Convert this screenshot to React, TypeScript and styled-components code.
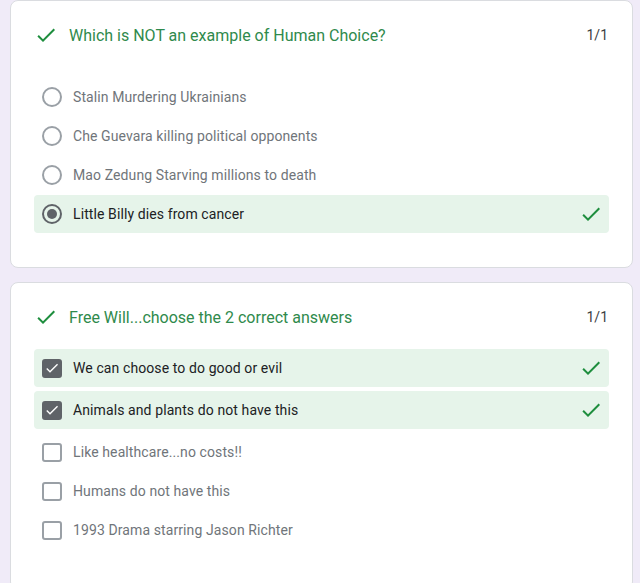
import React from "react";
import styled, { createGlobalStyle } from "styled-components";

const Global = createGlobalStyle`
  html, body { margin: 0; padding: 0; background: #f0ebf8; }
  body { font-family: Roboto, "Liberation Sans", Arial, sans-serif; }
`;

const Page = styled.div`
  display: flex;
  flex-direction: column;
  gap: 14px;
  padding: 0 7px 0 10px;
  width: 640px;
  box-sizing: border-box;
`;

const Card = styled.section<{ $pb: number }>`
  background: #fff;
  border: 1px solid #dadce0;
  border-radius: 8px;
  padding: 23px 0 ${(p) => p.$pb}px 0;
  box-sizing: border-box;
`;

const Header = styled.div<{ $mb: number }>`
  display: flex;
  align-items: center;
  height: 22px;
  padding: 0 24px 0 23px;
  margin-bottom: ${(p) => p.$mb}px;
`;

const Title = styled.div`
  flex: 1;
  margin-left: 11px;
  font-size: 16px;
  color: #2f8a4c;
`;

const Score = styled.div`
  font-size: 14px;
  color: #3c4043;
`;

const List = styled.div`
  display: flex;
  flex-direction: column;
  gap: 1px;
  padding: 0 23px;
`;

const Row = styled.div<{ $correct?: boolean; $spaced?: boolean }>`
  display: flex;
  align-items: center;
  height: 38px;
  padding: 0 6px 0 8px;
  border-radius: 4px;
  margin-bottom: ${(p) => (p.$spaced ? 3 : 0)}px;
  background: ${(p) => (p.$correct ? "#e6f4ea" : "transparent")};
`;

const Label = styled.span<{ $dark?: boolean }>`
  flex: 1;
  margin-left: 11px;
  font-size: 14px;
  color: ${(p) => (p.$dark ? "#202124" : "#70757a")};
  letter-spacing: 0.1px;
`;

const Radio = styled.span<{ $on?: boolean }>`
  width: 20px;
  height: 20px;
  box-sizing: border-box;
  border-radius: 50%;
  border: 2px solid ${(p) => (p.$on ? "#5f6368" : "#9aa0a6")};
  display: flex;
  align-items: center;
  justify-content: center;
  &::after {
    content: "";
    width: 10px;
    height: 10px;
    border-radius: 50%;
    background: ${(p) => (p.$on ? "#5f6368" : "transparent")};
  }
`;

const Box = styled.span<{ $on?: boolean }>`
  width: 20px;
  height: 19px;
  box-sizing: border-box;
  border-radius: 3px;
  border: 2px solid ${(p) => (p.$on ? "#5f6368" : "#9aa0a6")};
  background: ${(p) => (p.$on ? "#5f6368" : "transparent")};
  display: flex;
  align-items: center;
  justify-content: center;
`;

const Check = ({ size = 24, color = "#1e8e3e" }: { size?: number; color?: string }) => (
  <svg width={size} height={size} viewBox="0 0 24 24" fill={color}>
    <path d="M9 16.17L4.83 12l-1.42 1.41L9 19 21 7l-1.41-1.41z" />
  </svg>
);

type Opt = { text: string; correct?: boolean };

const q1: Opt[] = [
  { text: "Stalin Murdering Ukrainians" },
  { text: "Che Guevara killing political opponents" },
  { text: "Mao Zedung Starving millions to death" },
  { text: "Little Billy dies from cancer", correct: true },
];

const q2: Opt[] = [
  { text: "We can choose to do good or evil", correct: true },
  { text: "Animals and plants do not have this", correct: true },
  { text: "Like healthcare...no costs!!" },
  { text: "Humans do not have this" },
  { text: "1993 Drama starring Jason Richter" },
];

export default function App() {
  return (
    <>
      <Global />
      <Page>
        <Card $pb={34}>
          <Header $mb={32}>
            <Check />
            <Title>Which is NOT an example of Human Choice?</Title>
            <Score>1/1</Score>
          </Header>
          <List>
            {q1.map((o) => (
              <Row key={o.text} $correct={o.correct}>
                <Radio $on={o.correct} />
                <Label $dark={o.correct}>{o.text}</Label>
                {o.correct && <Check />}
              </Row>
            ))}
          </List>
        </Card>
        <Card $pb={40}>
          <Header $mb={21}>
            <Check />
            <Title>Free Will...choose the 2 correct answers</Title>
            <Score>1/1</Score>
          </Header>
          <List>
            {q2.map((o) => (
              <Row key={o.text} $correct={o.correct} $spaced={o.correct}>
                <Box $on={o.correct}>{o.correct && <Check size={16} color="#fff" />}</Box>
                <Label $dark={o.correct}>{o.text}</Label>
                {o.correct && <Check />}
              </Row>
            ))}
          </List>
        </Card>
      </Page>
    </>
  );
}
